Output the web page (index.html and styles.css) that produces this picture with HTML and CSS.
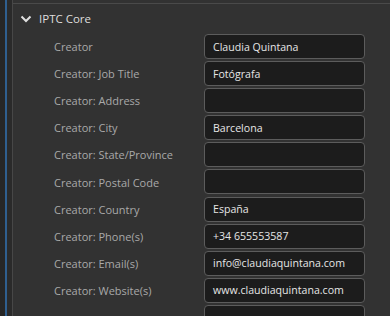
FILE: index.html
```html
<!DOCTYPE html>
<html lang="es">
<head>
  <meta charset="UTF-8" />
  <title>IPTC Core</title>
  <link rel="stylesheet" href="styles.css">
</head>
<body>
  <div class="gutter"></div>

  <div class="panel">
    <div class="section-head">
      <svg class="chevron" width="12" height="8" viewBox="0 0 12 8">
        <path d="M1.5 1.5 L6 6 L10.5 1.5" fill="none" stroke="#e0e0e0" stroke-width="2"/>
      </svg>
      <span>IPTC Core</span>
    </div>

    <div class="fields">
      <label>Creator</label>
      <div class="field">Claudia Quintana</div>

      <label>Creator: Job Title</label>
      <div class="field">Fotógrafa</div>

      <label>Creator: Address</label>
      <div class="field"></div>

      <label>Creator: City</label>
      <div class="field">Barcelona</div>

      <label>Creator: State/Province</label>
      <div class="field"></div>

      <label>Creator: Postal Code</label>
      <div class="field"></div>

      <label>Creator: Country</label>
      <div class="field">España</div>

      <label>Creator: Phone(s)</label>
      <div class="field">+34 655553587</div>

      <label>Creator: Email(s)</label>
      <div class="field">info@claudiaquintana.com</div>

      <label>Creator: Website(s)</label>
      <div class="field">www.claudiaquintana.com</div>

      <label class="last">Headline</label>
      <div class="field"></div>
    </div>
  </div>
</body>
</html>
```

FILE: styles.css
```css
html, body {
  height: 100%;
}

body {
  margin: 0;
  display: flex;
  background: #2b2b2b;
  font-family: 'Open Sans', sans-serif;
  overflow: hidden;
}

/* strip on the left with the blue splitter */
.gutter {
  width: 12px;
  flex-shrink: 0;
  background: linear-gradient(to right, #262626 0 5px, #2f5f8f 5px 7px, #2a2a2a 7px);
}

.panel {
  flex: 1;
  background: #323232;
  border-left: 1px solid #474747;
  padding-top: 3px;
}

.section-head {
  border-top: 1px solid #4a4a4a;
  height: 29px;
  display: flex;
  align-items: center;
  padding-left: 7px;
  color: #dedede;
  font-family: 'Open Sans', sans-serif;
  font-size: 11.5px;
}

.chevron {
  margin-right: 7px;
}

.fields {
  display: grid;
  grid-template-columns: 150px 161px;
  grid-auto-rows: 27.1px;
  padding-left: 41px;
}

.fields label {
  display: flex;
  align-items: center;
  color: #a9a9a9;
  font-size: 11px;
}

.fields label.last {
  padding-top: 6px;
}

.field {
  margin-top: 1px;
  height: 25px;
  box-sizing: border-box;
  background: #1c1c1c;
  border: 1px solid #5c5c5c;
  border-radius: 4px;
  color: #e6e6e6;
  font-family: 'Open Sans', sans-serif;
  font-size: 10.6px;
  padding: 0 8px;
  display: flex;
  align-items: center;
}
```
